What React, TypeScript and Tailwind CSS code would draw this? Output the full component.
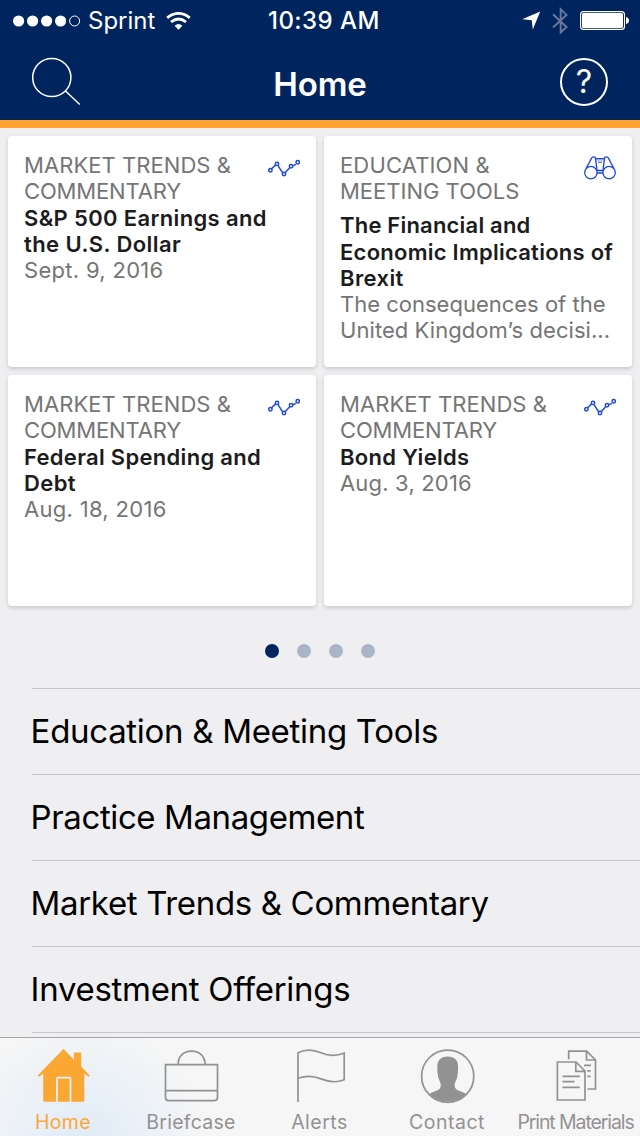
import type { ReactNode } from "react";

type CardLine = { text: string; className: string };

type CardData = { icon: "trend" | "binoculars"; lines: CardLine[] };

const cards: CardData[] = [
  {
    icon: "trend",
    lines: [
      { text: "MARKET TRENDS &", className: "text-[#757575] tracking-[0.06px]" },
      { text: "COMMENTARY", className: "text-[#757575] tracking-[-0.16px]" },
      { text: "S&P 500 Earnings and", className: "mt-px font-semibold text-[#1c1c1e] tracking-[0.35px]" },
      { text: "the U.S. Dollar", className: "font-semibold text-[#1c1c1e] tracking-[0.42px]" },
      { text: "Sept. 9, 2016", className: "text-[#757575] tracking-[0.3px]" },
    ],
  },
  {
    icon: "binoculars",
    lines: [
      { text: "EDUCATION &", className: "text-[#757575] tracking-[0.15px]" },
      { text: "MEETING TOOLS", className: "text-[#757575] tracking-[0px]" },
      { text: "The Financial and", className: "mt-2 font-semibold text-[#1c1c1e] tracking-[0.2px]" },
      { text: "Economic Implications of", className: "mt-px font-semibold text-[#1c1c1e] tracking-[0.25px]" },
      { text: "Brexit", className: "font-semibold text-[#1c1c1e] tracking-[0.4px]" },
      { text: "The consequences of the", className: "text-[#757575] tracking-[0px]" },
      { text: "United Kingdom’s decisi...", className: "text-[#757575] tracking-[0.06px]" },
    ],
  },
  {
    icon: "trend",
    lines: [
      { text: "MARKET TRENDS &", className: "text-[#757575] tracking-[0.06px]" },
      { text: "COMMENTARY", className: "text-[#757575] tracking-[-0.16px]" },
      { text: "Federal Spending and", className: "mt-px font-semibold text-[#1c1c1e] tracking-[0.3px]" },
      { text: "Debt", className: "font-semibold text-[#1c1c1e] tracking-[0.4px]" },
      { text: "Aug. 18, 2016", className: "text-[#757575] tracking-[0.3px]" },
    ],
  },
  {
    icon: "trend",
    lines: [
      { text: "MARKET TRENDS &", className: "text-[#757575] tracking-[0.06px]" },
      { text: "COMMENTARY", className: "text-[#757575] tracking-[-0.16px]" },
      { text: "Bond Yields", className: "mt-px font-semibold text-[#1c1c1e] tracking-[0.3px]" },
      { text: "Aug. 3, 2016", className: "text-[#757575] tracking-[0.18px]" },
    ],
  },
];

const sections = [
  { text: "Education & Meeting Tools", className: "tracking-[-0.3px]" },
  { text: "Practice Management", className: "tracking-[-0.4px]" },
  { text: "Market Trends & Commentary", className: "tracking-[-0.34px]" },
  { text: "Investment Offerings", className: "tracking-[-0.3px]" },
];

function TrendIcon() {
  return (
    <svg width="32" height="32" viewBox="0 0 32 32" fill="none" stroke="#1f49d6" strokeWidth="1.5">
      <path d="M3.3 17 7.7 12.9M10 13.6l5 7.7M17.3 20.6l4.2-4.6M24.7 13.9l3.3-1.5" />
      <circle cx="2.4" cy="18.2" r="1.7" />
      <circle cx="9" cy="11.9" r="1.7" />
      <circle cx="16" cy="22" r="1.7" />
      <circle cx="23" cy="14.3" r="1.7" />
      <circle cx="29.7" cy="10.3" r="1.7" />
    </svg>
  );
}

function BinocularsIcon() {
  return (
    <svg width="32" height="32" viewBox="0 0 32 32" fill="none" stroke="#1f49d6" strokeWidth="1.3">
      <circle cx="6.9" cy="20.6" r="6.2" />
      <circle cx="25.1" cy="20.6" r="6.2" />
      <path d="M2 16.6 7.7 5.9Q9.5 4 11.4 5.6L13 17.8M30 16.6 24.3 5.9Q22.5 4 20.6 5.6L19 17.8" />
      <path d="M11.8 6.7h8.4M12.5 18.5h7M13 21h6" />
      <path d="M14 10.2h4" strokeWidth="1" />
      <path d="M12 8h8" strokeWidth="0.5" />
    </svg>
  );
}

function StatusBar() {
  return (
    <div className="flex h-10 items-center pt-px text-white">
      <div className="flex w-[268px] items-center pl-[13px]">
        <svg width="68" height="12" viewBox="0 0 68 12" fill="#fff">
          <circle cx="5.6" cy="6" r="5.6" />
          <circle cx="19.6" cy="6" r="5.6" />
          <circle cx="33.6" cy="6" r="5.6" />
          <circle cx="47.6" cy="6" r="5.6" />
          <circle cx="61.6" cy="6" r="5" fill="none" stroke="#fff" />
        </svg>
        <span className="ml-[7px] w-[70px] pt-px text-[24px] leading-[38px] tracking-[0px]">Sprint</span>
        <svg className="ml-2" width="25" height="18" viewBox="0 0 25 18" fill="none" stroke="#fff" strokeWidth="2.8">
          <path d="M1.2 5.8Q12.5-3 23.8 5.8" />
          <path d="M5 10Q12.5 4 20 10" />
          <path d="M8.6 13.7Q12.5 10.4 16.4 13.7L12.5 17.7Z" fill="#fff" stroke="none" />
        </svg>
      </div>
      <span className="pt-px text-[24px] leading-[38px] font-medium whitespace-nowrap tracking-[0.45px]">10:39 AM</span>
      <div className="ml-auto flex items-center pr-[10px]">
        <svg width="19" height="19" viewBox="0 0 19 19" fill="#fff">
          <path d="M0.2 8.2 18.2.6 10.8 18.5 9.7 9.2Z" />
        </svg>
        <svg className="ml-[11px]" width="17" height="28" viewBox="0 0 17 28" fill="none" stroke="#66779e" strokeWidth="2">
          <path d="M1 7.3 14.5 20 8.7 25.5V2.3l5.8 5.6L1 20.5" />
        </svg>
        <svg className="ml-[11px]" width="50" height="19" viewBox="0 0 50 19">
          <rect x="0.6" y="0.6" width="43.9" height="17.8" rx="3" fill="none" stroke="#fff" strokeWidth="1.1" />
          <rect x="2" y="2" width="41" height="15" rx="1.6" fill="#fff" />
          <path d="M46 6q3 .8 3 3.5t-3 3.5Z" fill="#fff" />
        </svg>
      </div>
    </div>
  );
}

function Header() {
  return (
    <header className="h-32 shrink-0 border-b-8 border-[#ffa130] bg-[#00245d]">
      <StatusBar />
      <div className="grid h-20 grid-cols-3 items-center px-8">
        <svg className="mt-1" width="50" height="50" viewBox="0 0 50 50" fill="none" stroke="#fff" strokeWidth="1.5">
          <circle cx="19.8" cy="20.5" r="19.1" />
          <path d="M33.5 34 47.8 47.5" />
        </svg>
        <h1 className="pt-2 text-center text-[33px] leading-10 font-semibold tracking-[-0.1px] text-white">Home</h1>
        <div className="mt-1 flex h-12 w-12 items-center justify-center justify-self-end rounded-full border-2 border-white text-[32px] leading-none font-normal text-white">
          ?
        </div>
      </div>
    </header>
  );
}

function Card({ icon, lines }: CardData) {
  return (
    <article className="flex h-[231px] justify-between rounded bg-white p-4 shadow-[0_2px_4px_rgba(0,0,0,0.16)]">
      <div className="w-0 text-[22px] leading-[26px] whitespace-nowrap">
        {lines.map((line) => (
          <p key={line.text} className={line.className}>
            {line.text}
          </p>
        ))}
      </div>
      {icon === "trend" ? <TrendIcon /> : <BinocularsIcon />}
    </article>
  );
}

function Tab({ label, labelClass, children }: { label: string; labelClass: string; children: ReactNode }) {
  return (
    <div className="flex w-32 flex-col items-center pr-0.5">
      <svg className="mt-[9px] ml-px" width="64" height="60" viewBox="0 0 64 60" fill="none" stroke="#929292" strokeWidth="1.7">
        {children}
      </svg>
      <span className={`mt-[3px] text-[19.5px] leading-6 whitespace-nowrap ${labelClass}`}>{label}</span>
    </div>
  );
}

function TabBar() {
  return (
    <nav className="flex h-[99px] shrink-0 border-t border-[#a6a6aa] bg-[#f6f6f6] bg-[radial-gradient(circle_at_84px_106px,#dfebf7_0px,#e9f0f7_55px,#f6f6f6_125px)]">
      <Tab label="Home" labelClass="text-[#fba733] tracking-[0.4px]">
        <path d="M31.5 2 42 12.7V6.3q0-.8.8-.8h5.6q.8 0 .8.8V19.5L57.7 28.5 56.5 29.8 52.3 26.5V53.5q0 1.3-1.3 1.3H12.5q-1.3 0-1.3-1.3V26.5L7 29.8 5.7 28.5Z" fill="#fba733" stroke="none" />
        <path d="M24.9 55V32q0-1.3 1.3-1.3h11q1.3 0 1.3 1.3v23" stroke="#f2f3f5" />
      </Tab>
      <Tab label="Briefcase" labelClass="text-[#929292] tracking-[0.25px]">
        <path d="M5.5 17.6h52v33q0 3-3 3h-46q-3 0-3-3ZM5.5 43.6h52M18.1 17.6C18.1 9 24 4.2 31.6 4.2S45.1 9 45.1 17.6" />
      </Tab>
      <Tab label="Alerts" labelClass="text-[#929292] tracking-[0.5px] pl-px">
        <path d="M10 55V5.8c8-3.8 15-3.4 23 0s16 3.3 23.2.2v26.8c-8 3.3-15 2.4-23.2-.9s-15-3.3-23-.7" />
      </Tab>
      <Tab label="Contact" labelClass="text-[#929292] tracking-[0.5px]">
        <circle cx="31.7" cy="29.2" r="26.1" />
        <path d="M31.7 9.4c7 0 10.6 4 10.4 10.5-.1 4-.2 10-2.1 13.5-1.8 3.5-2 7.2.5 9 3.3 2.1 7 2.2 9.7 4.7a26 26 0 0 1-37 0c2.7-2.5 6.4-2.6 9.7-4.7 2.5-1.8 2.3-5.5.5-9-1.9-3.5-2-9.5-2.1-13.5-.2-6.5 3.4-10.5 10.4-10.5Z" fill="#929292" stroke="none" />
      </Tab>
      <Tab label="Print Materials" labelClass="text-[#929292] tracking-[-1.1px] pl-px">
        <g transform="translate(-0.5 0)">
          <path d="M13.9 15h18.6l9 9v29H13.9ZM32.3 15v9.3h9.2M19 29.3h17.3M19 34.7h12M19 40.3h17.3" />
          <path d="M25.2 12.3V4.2h18l8.8 8.8v29h-8M43 4.2V13h9M40.5 18.4h7M43.8 23.8h3.4M43.8 29.3h3.4" />
        </g>
      </Tab>
    </nav>
  );
}

export default function App() {
  return (
    <div className="flex h-[1136px] w-[640px] flex-col overflow-hidden bg-[#efeff1] font-['Inter','Liberation_Sans',sans-serif]">
      <Header />
      <main className="flex min-h-0 grow flex-col overflow-hidden">
        <div className="grid shrink-0 grid-cols-2 gap-2 p-2 pb-0">
          {cards.map((card, index) => (
            <Card key={index} {...card} />
          ))}
        </div>
        <div className="flex h-[82px] shrink-0 items-center justify-center gap-[18px] pt-2">
          <span className="h-3.5 w-3.5 rounded-full bg-[#00245d]" />
          <span className="h-3.5 w-3.5 rounded-full bg-[#a9b4c8]" />
          <span className="h-3.5 w-3.5 rounded-full bg-[#a9b4c8]" />
          <span className="h-3.5 w-3.5 rounded-full bg-[#a9b4c8]" />
        </div>
        <ul className="ml-8 shrink-0 border-b border-[#c7c7cb]">
          {sections.map((section) => (
            <li key={section.text} className="flex h-[86px] items-center border-t border-[#c7c7cb] pb-0.5 text-[33px] leading-10 text-black">
              <span className={`-ml-[1.4px] whitespace-nowrap ${section.className}`}>{section.text}</span>
            </li>
          ))}
        </ul>
      </main>
      <TabBar />
    </div>
  );
}
